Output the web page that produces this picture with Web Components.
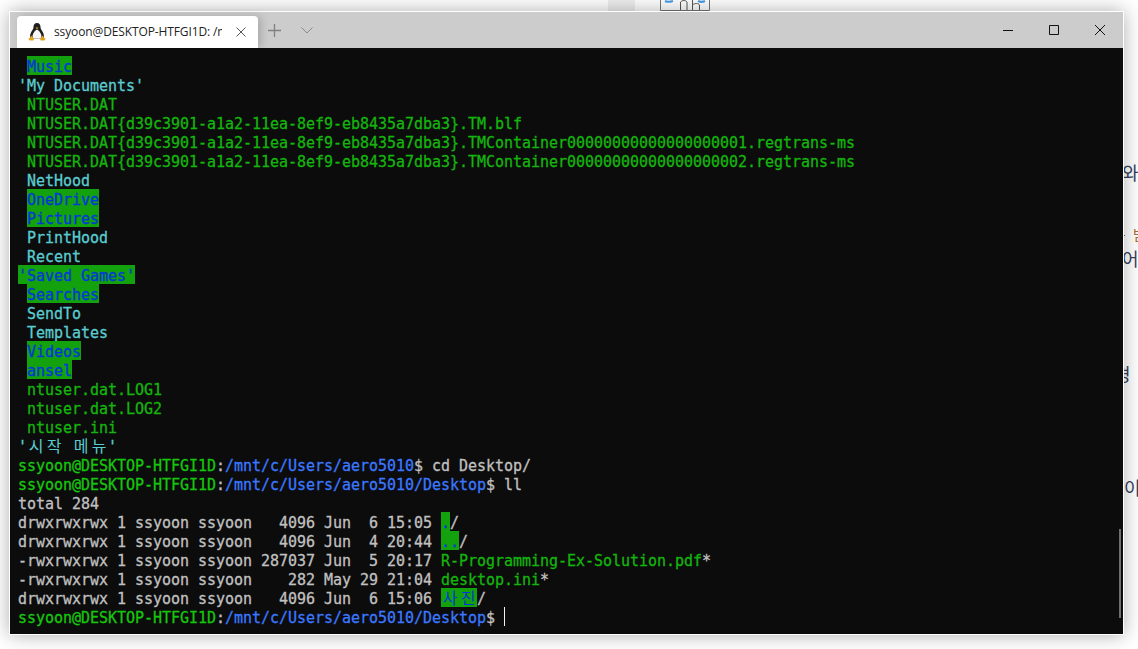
<!DOCTYPE html>
<html lang="ko">
<head>
<meta charset="utf-8">
<title>Terminal</title>
<style>
  html, body { margin: 0; height: 100%; background: #fff; overflow: hidden; }
</style>
</head>
<body>
<desktop-page>
  <terminal-window>
    <term-tabbar title-text="ssyoon@DESKTOP-HTFGI1D: /mnt/c/Users/aero5010/Desktop"></term-tabbar>
    <term-screen></term-screen>
  </terminal-window>
</desktop-page>

<script>
// what sits behind the window, only its edges show
class DesktopPage extends HTMLElement {
  constructor() {
    super();
    this.attachShadow({ mode: 'open' }).innerHTML = `
      <style>
        :host { display: block; position: relative; width: 1138px; height: 649px; overflow: hidden; background: #fff; }
        .stripe { position: absolute; left: 608px; top: 0; width: 27px; height: 12px; background: #efefef; }
        svg { position: absolute; left: 658px; top: 0; }
        .frag { position: absolute; font: 18px/20px "Noto Sans CJK KR", sans-serif; color: #33415c; white-space: nowrap; }
        .dot { position: absolute; left: 1124px; top: 235px; width: 1px; height: 1px; background: #4a6aa0; }
      </style>
      <div class="stripe"></div>
      <svg width="53" height="12" viewBox="0 0 53 12" fill="none" stroke="#777">
        <path d="M2.500 0v10.500h49V0"/>
        <path d="M7 1c2 1 5 1 8 0M40 1c2 1 5 1 7 0" stroke="#4a9fe8" stroke-width="2"/>
        <path d="M22.500 10V2c2-2 5-2 6.500 0v8M34.500 0v10M34.500 5c2-2 6-2 7 0v5" stroke="#555"/>
      </svg>
      <span class="frag" style="left:1122px;top:162px">와</span>
      <span class="frag" style="left:1133px;top:224px;color:#a86a30;font-size:14px">받</span>
      <span class="dot"></span>
      <span class="frag" style="left:1122px;top:248px">어</span>
      <span class="frag" style="left:1114px;top:363px">형</span>
      <span class="frag" style="left:1124px;top:477px">이</span>
      <slot></slot>`;
  }
}

class TerminalWindow extends HTMLElement {
  constructor() {
    super();
    this.attachShadow({ mode: 'open' }).innerHTML = `
      <style>
        :host {
          position: absolute; left: 9px; top: 11px; width: 1113px; height: 622px;
          display: flex; flex-direction: column;
          border: 1px solid #fff;
          box-shadow: 0 0 18px rgba(0,0,0,.32);
          background: #0c0c0c;
        }
      </style>
      <slot></slot>`;
  }
}

const PENGUIN = `
  <svg width="18" height="18" viewBox="0 0 18 18">
    <path d="M9 0C6.700 0 5.400 1.700 5.500 4 5.600 6 4 7.500 3 9.500 2.100 11.300 1.800 13.300 2.500 15.500h13c.7-2.200.4-4.200-.5-6C14 7.500 12.400 6 12.500 4 12.600 1.700 11.300 0 9 0z" fill="#1e1e1e"/>
    <path d="M9 6.500c-1.500.6-3.800 3-4.300 5.500-.3 1.500 0 2.800.5 3.500h7.600c.5-.7.800-2 .5-3.500C12.800 9.500 10.500 7.100 9 6.500z" fill="#f6f6f6"/>
    <path d="M7.400 4.400h3.200L9 6.200z" fill="#e8a81c"/>
    <path d="M3.500 12.500 6 15.500 5.300 17.500H1.800L.2 15.800l1.500-.8zM14.500 12.500 12 15.500l.7 2h3.500l1.600-1.700-1.500-.8z" fill="#e0a020"/>
  </svg>`;

class TermTabbar extends HTMLElement {
  constructor() {
    super();
    const title = this.getAttribute('title-text') || '';
    this.attachShadow({ mode: 'open' }).innerHTML = `
      <style>
        :host {
          flex: none; height: 36px; box-sizing: border-box; padding-left: 7px;
          display: flex; align-items: flex-end; background: #ccc;
        }
        .tab {
          width: 241px; height: 32px; box-sizing: border-box; padding: 0 12px 0 11px;
          display: flex; align-items: center; background: #fff;
          border-radius: 4px 4px 0 0;
          box-shadow: 3px 0 8px rgba(0,0,0,.18);
        }
        .tab svg:first-child { flex: none; margin-top: -1px; }
        .title {
          width: 168px; margin-left: 8px; overflow: hidden; white-space: nowrap;
          font: 12px/16px "Open Sans", sans-serif; letter-spacing: -.12px; color: #222;
        }
        .x { flex: none; margin-left: 14px; }
        .btn { flex: none; display: flex; align-items: center; justify-content: center; align-self: stretch; }
        .plus { width: 34px; margin-left: -1px; }
        .down { width: 32px; }
        .caps { margin-left: auto; align-self: stretch; display: flex; }
        .cap { width: 46px; display: flex; align-items: center; justify-content: center; }
      </style>
      <div class="tab">
        ${PENGUIN}
        <span class="title">${title}</span>
        <svg class="x" width="10" height="10" viewBox="0 0 10 10" stroke="#555" fill="none"><path d="M.500.500l9 9M9.500.500l-9 9"/></svg>
      </div>
      <div class="btn plus"><svg width="13" height="13" viewBox="0 0 13 13" stroke="#808080" stroke-width="1.300" fill="none"><path d="M6.500 0v13M0 6.500h13"/></svg></div>
      <div class="btn down"><svg width="12" height="7" viewBox="0 0 12 7" stroke="#8a8a8a" fill="none"><path d="M.5.500 6 6l5.500-5.500"/></svg></div>
      <div class="caps">
        <div class="cap"><svg width="10" height="10" viewBox="0 0 10 10" stroke="#111" fill="none"><path d="M0 5.500h10"/></svg></div>
        <div class="cap"><svg width="10" height="10" viewBox="0 0 10 10" stroke="#111" fill="none"><path d="M.5.500h9v9h-9z"/></svg></div>
        <div class="cap"><svg width="10" height="10" viewBox="0 0 10 10" stroke="#111" fill="none"><path d="M0 0l10 10M10 0 0 10"/></svg></div>
      </div>`;
  }
}

const HOST = 'ssyoon@DESKTOP-HTFGI1D';
const BASE = '/mnt/c/Users/aero5010';
const GUID = 'NTUSER.DAT{d39c3901-a1a2-11ea-8ef9-eb8435a7dba3}';

const span = (cls, txt) => `<span class="${cls}">${txt}</span>`;
// hangul takes two cells of the grid
const cells = (txt) => txt.replace(/[\uac00-\ud7a3]/g, (c) => `<i>${c}</i>`);
const sp = ' ';
const prompt = (path, rest) => span('g2', HOST) + span('w', ':') + span('p', path) + span('w', '$ ' + rest);
const ls = (meta, name) => span('w', meta + ' ') + name;

const LINES = [
  sp + span('h', 'Music'),
  span('c', "'My Documents'"),
  sp + span('g', 'NTUSER.DAT'),
  sp + span('g', GUID + '.TM.blf'),
  sp + span('g', GUID + '.TMContainer00000000000000000001.regtrans-ms'),
  sp + span('g', GUID + '.TMContainer00000000000000000002.regtrans-ms'),
  sp + span('c', 'NetHood'),
  sp + span('h', 'OneDrive'),
  sp + span('h', 'Pictures'),
  sp + span('c', 'PrintHood'),
  sp + span('c', 'Recent'),
  span('h', "'Saved Games'"),
  sp + span('h', 'Searches'),
  sp + span('c', 'SendTo'),
  sp + span('c', 'Templates'),
  sp + span('h', 'Videos'),
  sp + span('h', 'ansel'),
  sp + span('g', 'ntuser.dat.LOG1'),
  sp + span('g', 'ntuser.dat.LOG2'),
  sp + span('g', 'ntuser.ini'),
  span('c', cells("'시작 메뉴'")),
  prompt(BASE, 'cd Desktop/'),
  prompt(BASE + '/Desktop', 'll'),
  span('w', 'total 284'),
  ls('drwxrwxrwx 1 ssyoon ssyoon   4096 Jun  6 15:05', span('h', '.') + span('w', '/')),
  ls('drwxrwxrwx 1 ssyoon ssyoon   4096 Jun  4 20:44', span('h', '..') + span('w', '/')),
  ls('-rwxrwxrwx 1 ssyoon ssyoon 287037 Jun  5 20:17', span('g', 'R-Programming-Ex-Solution.pdf') + span('w', '*')),
  ls('-rwxrwxrwx 1 ssyoon ssyoon    282 May 29 21:04', span('g', 'desktop.ini') + span('w', '*')),
  ls('drwxrwxrwx 1 ssyoon ssyoon   4096 Jun  6 15:06', span('h', cells('사진')) + span('w', '/')),
  prompt(BASE + '/Desktop', '') + '<b></b>',
];

class TermScreen extends HTMLElement {
  constructor() {
    super();
    this.attachShadow({ mode: 'open' }).innerHTML = `
      <style>
        :host {
          flex: 1; min-height: 0; position: relative; display: block; overflow: hidden;
          box-sizing: border-box; padding: 8px 0 0 8px; background: #0c0c0c;
          font: 15px/23px "DejaVu Sans Mono", "Noto Sans CJK KR", monospace;
          letter-spacing: -.03px; font-variant-ligatures: none;
          -webkit-text-stroke: .3px;
        }
        div { height: 19px; white-space: pre; }
        span { display: inline-block; height: 19px; vertical-align: top; }
        i {
          display: inline-block; width: 18px; height: 19px; text-align: center; font-style: normal;
          font: 16px/19px "Noto Sans CJK KR", sans-serif; vertical-align: top; letter-spacing: 0;
          -webkit-text-stroke: 0;
        }
        .g { color: #14b50d; }
        .g2 { color: #16c60c; }
        .c { color: #5accd0; }
        .w { color: #c0c0c0; }
        .p { color: #3b78ff; }
        .h { color: #0037da; background: #13a10e; }
        b { display: inline-block; width: 1px; height: 19px; background: #f2f2f2; vertical-align: top; }
        .thumb { position: absolute; left: 1109px; top: 481px; width: 2px; height: 89px; background: #6e6e6e; }
      </style>
      ${LINES.map((l) => `<div>${l}</div>`).join('')}
      <em class="thumb"></em>`;
  }
}

customElements.define('desktop-page', DesktopPage);
customElements.define('terminal-window', TerminalWindow);
customElements.define('term-tabbar', TermTabbar);
customElements.define('term-screen', TermScreen);
</script>
</body>
</html>
